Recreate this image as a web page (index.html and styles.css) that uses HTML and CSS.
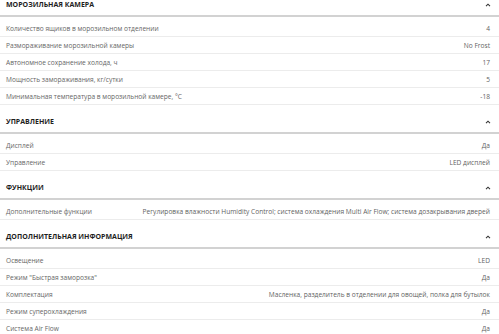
FILE: index.html
```html
<!DOCTYPE html>
<html lang="ru">
<head>
<meta charset="utf-8">
<link rel="stylesheet" href="styles.css">
</head>
<body>
<div class="page">
  <section class="group">
    <div class="group-head"><h2>МОРОЗИЛЬНАЯ КАМЕРА</h2><svg class="chev" width="6" height="4" viewBox="0 0 6 4"><polyline points="1,3.2 3,1.2 5,3.2" fill="none" stroke="#333" stroke-width="1.1"/></svg></div>
    <ul class="rows">
      <li><span class="label">Количество ящиков в морозильном отделении</span><span class="value">4</span></li>
      <li><span class="label">Размораживание морозильной камеры</span><span class="value">No Frost</span></li>
      <li><span class="label">Автономное сохранение холода, ч</span><span class="value">17</span></li>
      <li><span class="label">Мощность замораживания, кг/сутки</span><span class="value">5</span></li>
      <li><span class="label">Минимальная температура в морозильной камере, °C</span><span class="value">-18</span></li>
    </ul>
  </section>
  <section class="group">
    <div class="group-head"><h2>УПРАВЛЕНИЕ</h2><svg class="chev" width="6" height="4" viewBox="0 0 6 4"><polyline points="1,3.2 3,1.2 5,3.2" fill="none" stroke="#333" stroke-width="1.1"/></svg></div>
    <ul class="rows">
      <li><span class="label">Дисплей</span><span class="value">Да</span></li>
      <li><span class="label">Управление</span><span class="value">LED дисплей</span></li>
    </ul>
  </section>
  <section class="group">
    <div class="group-head"><h2>ФУНКЦИИ</h2><svg class="chev" width="6" height="4" viewBox="0 0 6 4"><polyline points="1,3.2 3,1.2 5,3.2" fill="none" stroke="#333" stroke-width="1.1"/></svg></div>
    <ul class="rows">
      <li><span class="label">Дополнительные функции</span><span class="value">Регулировка влажности Humidity Control; система охлаждения Multi Air Flow; система дозакрывания дверей</span></li>
    </ul>
  </section>
  <section class="group">
    <div class="group-head"><h2>ДОПОЛНИТЕЛЬНАЯ ИНФОРМАЦИЯ</h2><svg class="chev" width="6" height="4" viewBox="0 0 6 4"><polyline points="1,3.2 3,1.2 5,3.2" fill="none" stroke="#333" stroke-width="1.1"/></svg></div>
    <ul class="rows">
      <li><span class="label">Освещение</span><span class="value">LED</span></li>
      <li><span class="label">Режим "Быстрая заморозка"</span><span class="value">Да</span></li>
      <li><span class="label">Комплектация</span><span class="value">Масленка, разделитель в отделении для овощей, полка для бутылок</span></li>
      <li><span class="label">Режим суперохлаждения</span><span class="value">Да</span></li>
      <li><span class="label">Система Air Flow</span><span class="value">Да</span></li>
    </ul>
  </section>
</div>
</body>
</html>
```
FILE: styles.css
```css
html, body {
  margin: 0;
  padding: 0;
  background: #fff;
}
body {
  font-family: "Open Sans", "Liberation Sans", sans-serif;
  color: #555;
  overflow: hidden;
}
.page {
  margin-top: -12px;
}
.group-head {
  display: flex;
  align-items: center;
  justify-content: space-between;
  padding: 12px 8px 5px 6px;
  height: 10px;
  border-bottom: 2px solid #d2d2d2;
}
.group-head h2 {
  margin: 0;
  font-size: 7px;
  line-height: 10px;
  font-weight: 700;
  color: #1e1e1e;
}
.chev {
  display: block;
}
.rows {
  list-style: none;
  margin: 0;
  padding: 3px 0 0;
}
.rows li {
  display: flex;
  justify-content: space-between;
  align-items: center;
  height: 16px;
  padding: 0 9px 0 6px;
  border-bottom: 1px solid #ececec;
  font-size: 6.6px;
}
.label {
  color: #666;
}
.value {
  color: #5f5f5f;
  text-align: right;
}
```
